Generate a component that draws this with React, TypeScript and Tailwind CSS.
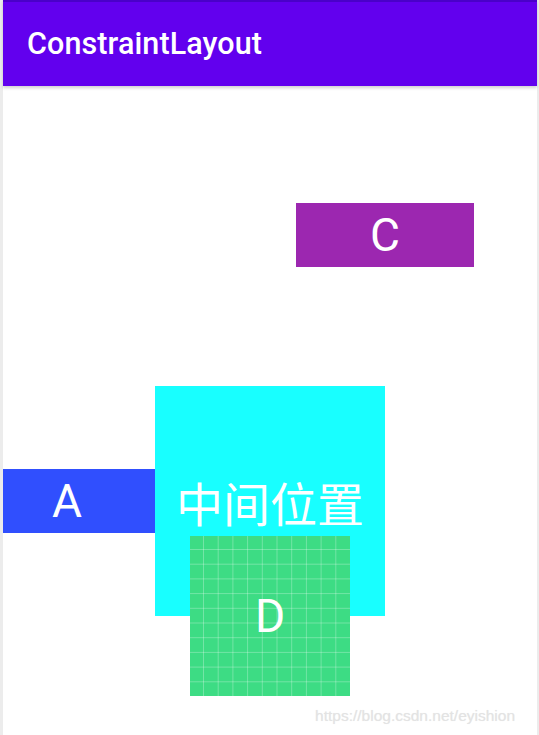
const GRID = Array.from({ length: 11 }, (_, i) => 13.5 + i * 14.7)

function GridPattern() {
  return (
    <svg className="absolute inset-0" width="160" height="160" viewBox="0 0 160 160">
      {GRID.map((p) => (
        <g key={p} stroke="#ffffff" strokeOpacity="0.28" strokeWidth="1">
          <line x1={p} y1="0" x2={p} y2="160" />
          <line x1="0" y1={p} x2="160" y2={p} />
        </g>
      ))}
    </svg>
  )
}

export default function App() {
  return (
    <div className="w-[539px] h-[735px] flex bg-[#ececec] pl-[3px] pr-[2px] font-['Roboto','Noto_Sans',sans-serif] overflow-hidden">
      <div className="flex-1 flex flex-col bg-white">
        {/* App bar */}
        <header className="shrink-0 flex flex-col shadow-[0_2px_3px_rgba(0,0,0,0.18)] relative z-10">
          <div className="h-[2px] bg-[#4a00c9]" />
          <div className="h-[84px] bg-[#6200ee] flex items-center pl-[24px]">
            <span className="text-white text-[30.5px] font-medium tracking-[0.1px]">ConstraintLayout</span>
          </div>
        </header>

        {/* ConstraintLayout canvas */}
        <div className="relative flex-1">
          <div className="absolute left-[293px] top-[117px] w-[178px] h-[64px] bg-[#9c27b0] flex items-center justify-center text-white text-[46px] leading-none">
            C
          </div>

          <div className="absolute left-0 top-[383px] w-[152px] h-[64px] bg-[#304ffe] flex items-center pl-[49px] text-white text-[46px] leading-none">
            A
          </div>

          <div className="absolute left-[152px] top-[300px] w-[230px] h-[230px] bg-[#18ffff] flex items-center justify-center text-white text-[47px] leading-none font-['Noto_Sans_CJK_SC',sans-serif]">
            中间位置
          </div>

          <div className="absolute left-[187px] top-[450px] w-[160px] h-[160px] bg-[#3ddc84] flex items-center justify-center text-white text-[46px] leading-none">
            <GridPattern />
            <span className="relative">D</span>
          </div>

          <span className="absolute right-[22px] bottom-[8px] text-[15.5px] text-[#e3e3e3] font-['Liberation_Sans',sans-serif] [text-shadow:0_0_1px_rgba(0,0,0,0.08)]">
            https://blog.csdn.net/eyishion
          </span>
        </div>
      </div>
    </div>
  )
}
